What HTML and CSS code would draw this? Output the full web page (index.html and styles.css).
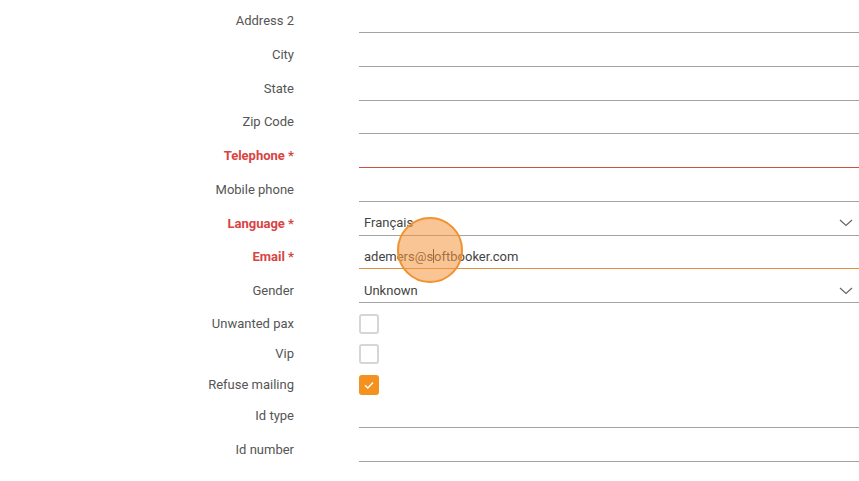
FILE: index.html
```html
<!DOCTYPE html>
<html>
<head>
    <title>Client</title>
    <link rel="stylesheet" href="styles.css">
</head>
<body>
    <div id="form">
        <div class="row"><label>Address 2</label><div class="field"></div></div>
        <div class="row"><label>City</label><div class="field"></div></div>
        <div class="row"><label>State</label><div class="field"></div></div>
        <div class="row"><label>Zip Code</label><div class="field"></div></div>
        <div class="row"><label class="required">Telephone *</label><div class="field invalid"></div></div>
        <div class="row"><label>Mobile phone</label><div class="field"></div></div>
        <div class="row">
            <label class="required">Language *</label>
            <div class="field select">
                <span>Français</span>
                <svg class="chevron" width="14" height="8" viewBox="0 0 14 8"><path d="M1 1 L7 6.5 L13 1" fill="none" stroke="#666" stroke-width="1.2"/></svg>
            </div>
        </div>
        <div class="row">
            <label class="required">Email *</label>
            <div class="field focused"><span>ademers@s<span class="caret"></span>oftbooker.com</span></div>
        </div>
        <div class="row">
            <label>Gender</label>
            <div class="field select">
                <span>Unknown</span>
                <svg class="chevron" width="14" height="8" viewBox="0 0 14 8"><path d="M1 1 L7 6.5 L13 1" fill="none" stroke="#666" stroke-width="1.2"/></svg>
            </div>
        </div>
        <div class="row check-row"><label>Unwanted pax</label><div class="box"></div></div>
        <div class="row check-row"><label>Vip</label><div class="box"></div></div>
        <div class="row check-row">
            <label>Refuse mailing</label>
            <div class="box checked">
                <svg width="20" height="20" viewBox="0 0 20 20"><path d="M6 10.2 L8.8 13 L14 7.5" fill="none" stroke="#fff" stroke-width="1.4"/></svg>
            </div>
        </div>
        <div class="row"><label>Id type</label><div class="field"></div></div>
        <div class="row"><label>Id number</label><div class="field"></div></div>
    </div>

    <!-- indicateur de clic -->
    <div id="click-dot"></div>
</body>
</html>
```

FILE: styles.css
```css
body {
    font-family: Roboto, "Liberation Sans", sans-serif;
    font-size: 13px;
    margin: 0;
    padding: 0;
    background-color: #fff;
    color: #555;
    overflow: hidden;
}

#form {
    margin-top: -0.75px;
}

.row {
    display: grid;
    grid-template-columns: 294px 1fr;
    column-gap: 65px;
    align-items: end;
    height: 33.75px;
}

.row label {
    text-align: right;
    line-height: 20px;
    padding-bottom: 2px;
    color: #555;
}

.row label.required {
    color: #d84444;
    font-weight: bold;
}

.field {
    height: 100%;
    box-sizing: border-box;
    border-bottom: 1px solid #a3a3a3;
    display: flex;
    align-items: flex-end;
    justify-content: space-between;
    padding: 0 6px 1.5px 5px;
    line-height: 20px;
    color: #444;
}

.field.invalid {
    border-bottom-color: #d0503f;
}

.field.focused {
    border-bottom-color: #e0913e;
}

.chevron {
    margin-bottom: 6px;
}

.caret {
    display: inline-block;
    width: 1px;
    height: 14px;
    background-color: #333;
    vertical-align: -2px;
}

.check-row {
    height: 30.5px;
}

.check-row label {
    padding-bottom: 0;
}

.box {
    width: 20px;
    height: 20px;
    box-sizing: border-box;
    border: 2px solid #d6d6d6;
    border-radius: 3px;
}

.box.checked {
    border: none;
    background-color: #f5921f;
}

.box svg {
    display: block;
}

#click-dot {
    position: absolute;
    left: 397px;
    top: 217px;
    width: 66px;
    height: 66px;
    box-sizing: border-box;
    border-radius: 50%;
    border: 2px solid #f0922e;
    background-color: rgba(245, 150, 60, 0.55);
}
```
